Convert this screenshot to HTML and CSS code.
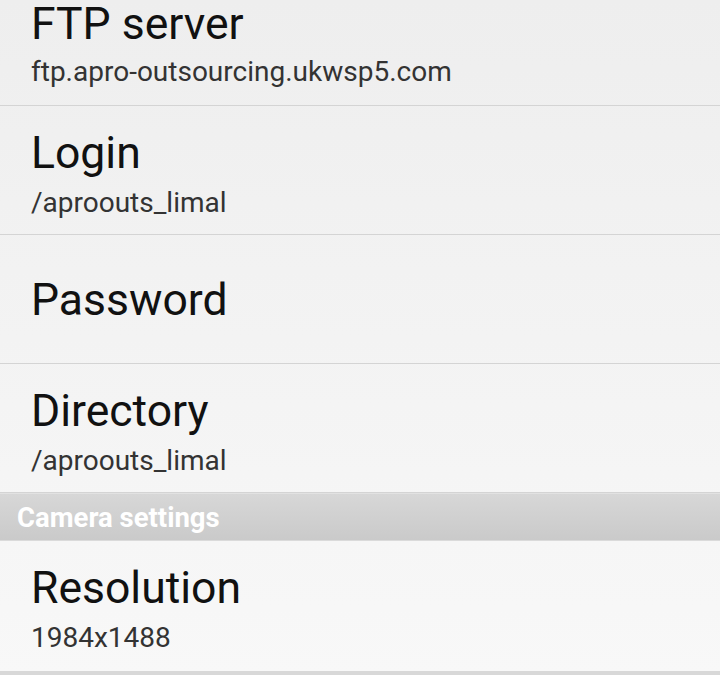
FILE: index.html
```html
<!DOCTYPE html>
<html>
<head>
<meta charset="utf-8">
<link rel="stylesheet" href="styles.css">
</head>
<body>
<div class="screen">
  <div class="list">
    <div class="pref top">
      <div class="title">FTP server</div>
      <div class="summary">ftp.apro-outsourcing.ukwsp5.com</div>
    </div>
    <div class="pref">
      <div class="title">Login</div>
      <div class="summary">/aproouts_limal</div>
    </div>
    <div class="pref single">
      <div class="title">Password</div>
    </div>
    <div class="pref">
      <div class="title">Directory</div>
      <div class="summary">/aproouts_limal</div>
    </div>
  </div>
  <div class="category">Camera settings</div>
  <div class="list">
    <div class="pref end">
      <div class="title">Resolution</div>
      <div class="summary">1984x1488</div>
    </div>
  </div>
</div>
</body>
</html>
```
FILE: styles.css
```css
html, body {
  margin: 0;
  padding: 0;
}
body {
  width: 720px;
  height: 675px;
  overflow: hidden;
  font-family: Roboto, "Noto Sans", sans-serif;
  background: linear-gradient(#eeeeee, #f8f8f8);
}
.screen {
  display: flex;
  flex-direction: column;
}
.pref {
  border-bottom: 1px solid #d4d4d4;
  padding: 21px 0 0 31px;
  display: flex;
  flex-direction: column;
  box-sizing: border-box;
  height: 129px;
}
.pref.top {
  height: 106px;
  padding-top: 0;
}
.pref.top .title {
  line-height: 48px;
}
.pref.top .summary {
  margin-top: 7px;
}
.pref.single {
  padding-top: 2px;
  justify-content: center;
}
.pref.end {
  height: 134px;
  border-bottom: 4px solid #d8d8d8;
}
.title {
  font-size: 44.5px;
  color: #111;
  line-height: 52px;
}
.summary {
  font-size: 28px;
  color: #333;
  line-height: 34px;
  margin-top: 7px;
}
.category {
  height: 48px;
  background: linear-gradient(#d7d7d7, #cacaca);
  border-top: 1px solid #e2e2e2;
  border-bottom: 1px solid #dadada;
  color: #fff;
  font-weight: bold;
  font-size: 27.5px;
  padding-left: 17px;
  display: flex;
  align-items: center;
  box-sizing: border-box;
}
```
